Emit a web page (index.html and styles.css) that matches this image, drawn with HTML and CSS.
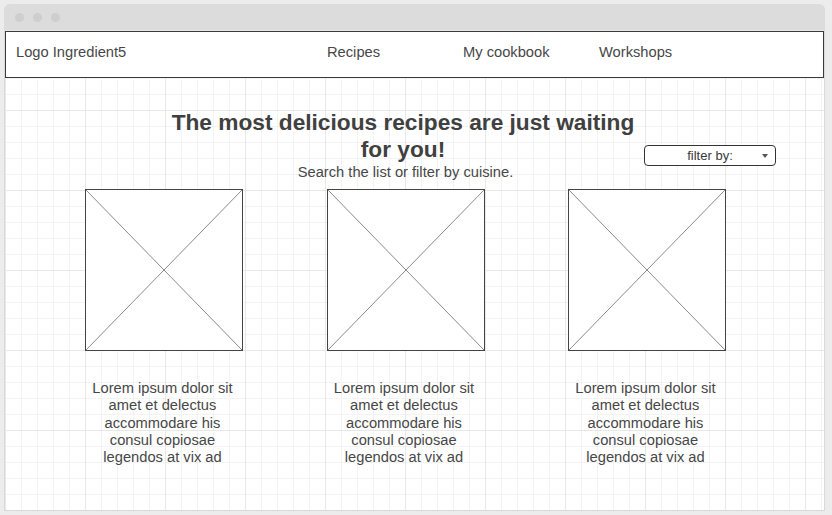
FILE: index.html
```html
<!DOCTYPE html>
<html lang="en">
<head>
<meta charset="utf-8">
<title>Ingredient5</title>
<link rel="stylesheet" href="styles.css">
</head>
<body>
<div class="window">
  <div class="titlebar">
    <span class="dot"></span><span class="dot"></span><span class="dot"></span>
  </div>
  <div class="content">
    <nav class="nav">
      <span class="logo">Logo Ingredient5</span>
      <a class="link">Recipes</a>
      <a class="link">My cookbook</a>
      <a class="link">Workshops</a>
    </nav>
    <section class="header">
      <div class="intro">
        <h1>The most delicious recipes are just waiting for you!</h1>
        <p>Search the list or filter by cuisine.</p>
      </div>
      <div class="select">
        <span class="select-label">filter by:</span>
        <span class="caret"></span>
      </div>
    </section>
    <section class="cards">
      <div class="card">
        <div class="ph"><svg viewBox="0 0 156 160" preserveAspectRatio="none"><line x1="0" y1="0" x2="156" y2="160"/><line x1="156" y1="0" x2="0" y2="160"/></svg></div>
        <p class="card-text">Lorem ipsum dolor sit amet et delectus accommodare his consul copiosae legendos at vix ad</p>
      </div>
      <div class="card">
        <div class="ph"><svg viewBox="0 0 156 160" preserveAspectRatio="none"><line x1="0" y1="0" x2="156" y2="160"/><line x1="156" y1="0" x2="0" y2="160"/></svg></div>
        <p class="card-text">Lorem ipsum dolor sit amet et delectus accommodare his consul copiosae legendos at vix ad</p>
      </div>
      <div class="card">
        <div class="ph"><svg viewBox="0 0 156 160" preserveAspectRatio="none"><line x1="0" y1="0" x2="156" y2="160"/><line x1="156" y1="0" x2="0" y2="160"/></svg></div>
        <p class="card-text">Lorem ipsum dolor sit amet et delectus accommodare his consul copiosae legendos at vix ad</p>
      </div>
    </section>
  </div>
</div>
</body>
</html>
```

FILE: styles.css
```css
html, body {
  margin: 0;
  padding: 0;
}
body {
  background: #ececec;
  font-family: "Liberation Sans", Arial, sans-serif;
  color: #474747;
  width: 832px;
  height: 515px;
  overflow: hidden;
}
.window {
  margin: 4px 0 0 4px;
  width: 821px;
  height: 507px;
  box-sizing: border-box;
  border: 1px solid #d9d9d9;
  border-top: none;
  border-radius: 6px 6px 0 0;
  display: flex;
  flex-direction: column;
  background: #fff;
}
.titlebar {
  height: 26px;
  margin: 0 -1px;
  background: #dcdcdc;
  border-radius: 6px 6px 0 0;
  display: flex;
  align-items: center;
  padding-left: 11px;
  gap: 9px;
  flex: none;
}
.dot {
  width: 9px;
  height: 9px;
  border-radius: 50%;
  background: #cecece;
}
.content {
  flex: 1;
  background-color: #fff;
  background-image:
    linear-gradient(to right, #e8e8e8 1px, transparent 1px),
    linear-gradient(to bottom, #e8e8e8 1px, transparent 1px),
    linear-gradient(to right, #f3f3f3 1px, transparent 1px),
    linear-gradient(to bottom, #f3f3f3 1px, transparent 1px);
  background-size: 80px 80px, 80px 80px, 16px 16px, 16px 16px;
  background-position: 0 0;
  padding-top: 1px;
}
.nav {
  height: 47px;
  box-sizing: border-box;
  border: 1px solid #3a3a3a;
  background: #fff;
  display: flex;
  align-items: flex-start;
  padding: 12px 0 0 10px;
  font-size: 14.7px;
  line-height: 17px;
  color: #474747;
}
.logo {
  width: 311px;
  flex: none;
}
.link {
  width: 136px;
  flex: none;
}
.header {
  display: flex;
  align-items: flex-start;
  margin-top: 31px;
  padding-left: 159px;
}
.intro {
  width: 478px;
  text-align: center;
}
.intro h1 {
  margin: 0;
  font-size: 22.7px;
  line-height: 27px;
  font-weight: bold;
  color: #404040;
}
.intro p {
  margin: 0;
  padding: 1px 0 0 5px;
  font-size: 14.7px;
  line-height: 17px;
  color: #474747;
}
.select {
  margin: 36px 0 0 2px;
  width: 132px;
  height: 21px;
  box-sizing: border-box;
  border: 1px solid #333;
  border-radius: 4px;
  background: #fff;
  display: grid;
  grid-template-columns: 1fr auto 1fr;
  align-items: center;
  font-size: 13px;
  color: #3a3a3a;
}
.select-label {
  grid-column: 2;
}
.caret {
  grid-column: 3;
  justify-self: end;
  margin-right: 7px;
  width: 0;
  height: 0;
  border-left: 3.5px solid transparent;
  border-right: 3.5px solid transparent;
  border-top: 4px solid #555;
}
.cards {
  display: grid;
  grid-template-columns: repeat(3, 158px);
  column-gap: 83.5px;
  padding-left: 80px;
  margin-top: 8px;
}
.ph {
  width: 158px;
  height: 162px;
  box-sizing: border-box;
  border: 1px solid #444;
  background: #fff;
}
.ph svg {
  display: block;
  width: 100%;
  height: 100%;
}
.ph line {
  stroke: #8a8a8a;
  stroke-width: 1;
}
.card-text {
  margin: 29px 0 0;
  padding-right: 3px;
  text-align: center;
  font-size: 14.7px;
  line-height: 17.25px;
  color: #474747;
}
```
